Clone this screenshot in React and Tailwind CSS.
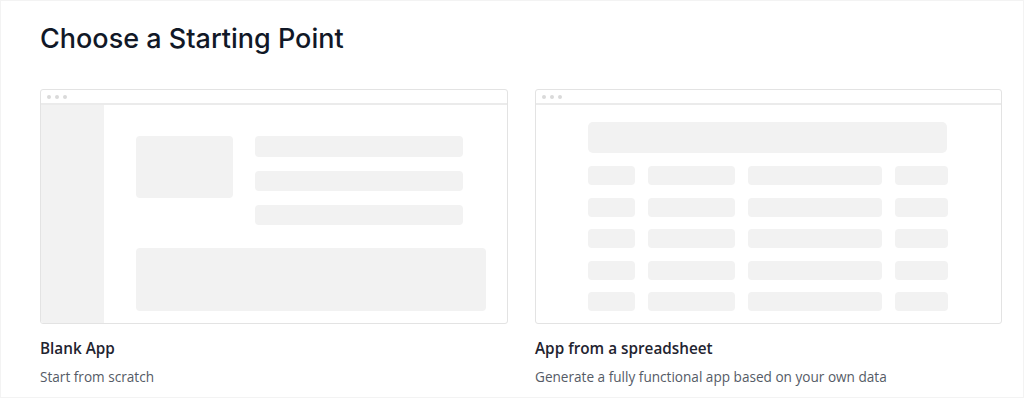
export default function App() {
  const rows = [0, 1, 2, 3, 4];
  const TitleBar = () => (
    <div className="h-[15px] shrink-0 border-b-2 border-[#ebebeb] flex items-center gap-[4px] pl-[6px]">
      <span className="w-[4px] h-[4px] rounded-full bg-[#dadada]" />
      <span className="w-[4px] h-[4px] rounded-full bg-[#dadada]" />
      <span className="w-[4px] h-[4px] rounded-full bg-[#dadada]" />
    </div>
  );
  return (
    <div className="w-[1024px] h-[398px] bg-white border border-[#f3f3f3] pl-[39px] pt-[22px] overflow-hidden" style={{ fontFamily: '"Open Sans", sans-serif' }}>
      <h1 className="text-[27px] leading-[32px] font-medium text-[#111827]" style={{ fontFamily: 'Inter, sans-serif' }}>
        Choose a Starting Point
      </h1>
      <div className="grid grid-cols-[468px_467px] gap-x-[27px] mt-[34px]">
        <div>
          <div className="h-[235px] border border-[#e3e3e3] rounded-[3px] flex flex-col overflow-hidden">
            <TitleBar />
            <div className="flex flex-1">
              <div className="w-[63px] bg-[#f2f2f2]" />
              <div className="flex-1 pt-[31px] pl-[32px] pr-[21px]">
                <div className="flex gap-[22px]">
                  <div className="w-[97px] h-[62px] rounded-[4px] bg-[#f2f2f2]" />
                  <div className="flex flex-col gap-[14px]">
                    <div className="w-[208px] h-[21px] rounded-[4px] bg-[#f2f2f2]" />
                    <div className="w-[208px] h-[20px] rounded-[4px] bg-[#f2f2f2]" />
                    <div className="w-[208px] h-[20px] rounded-[4px] bg-[#f2f2f2]" />
                  </div>
                </div>
                <div className="mt-[23px] h-[63px] rounded-[4px] bg-[#f2f2f2]" />
              </div>
            </div>
          </div>
          <div className="mt-[12px] text-[15.3px] leading-[24px] font-semibold text-[#1f2430]">Blank App</div>
          <div className="mt-[7px] text-[13.6px] leading-[20px] text-[#555b66]">Start from scratch</div>
        </div>
        <div>
          <div className="h-[235px] border border-[#e3e3e3] rounded-[3px] flex flex-col overflow-hidden">
            <TitleBar />
            <div className="flex-1 pt-[17px] pl-[52px]">
              <div className="w-[359px] h-[31px] rounded-[5px] bg-[#f2f2f2]" />
              <div className="mt-[13px] flex flex-col gap-[12.5px]">
                {rows.map((r) => (
                  <div key={r} className="flex gap-[13px]">
                    <div className="w-[47px] h-[19px] rounded-[4px] bg-[#f2f2f2]" />
                    <div className="w-[87px] h-[19px] rounded-[4px] bg-[#f2f2f2]" />
                    <div className="w-[134px] h-[19px] rounded-[4px] bg-[#f2f2f2]" />
                    <div className="w-[53px] h-[19px] rounded-[4px] bg-[#f2f2f2]" />
                  </div>
                ))}
              </div>
            </div>
          </div>
          <div className="mt-[12px] text-[15.3px] leading-[24px] font-semibold text-[#1f2430]">App from a spreadsheet</div>
          <div className="mt-[7px] text-[13.6px] leading-[20px] text-[#555b66]">Generate a fully functional app based on your own data</div>
        </div>
      </div>
    </div>
  );
}
